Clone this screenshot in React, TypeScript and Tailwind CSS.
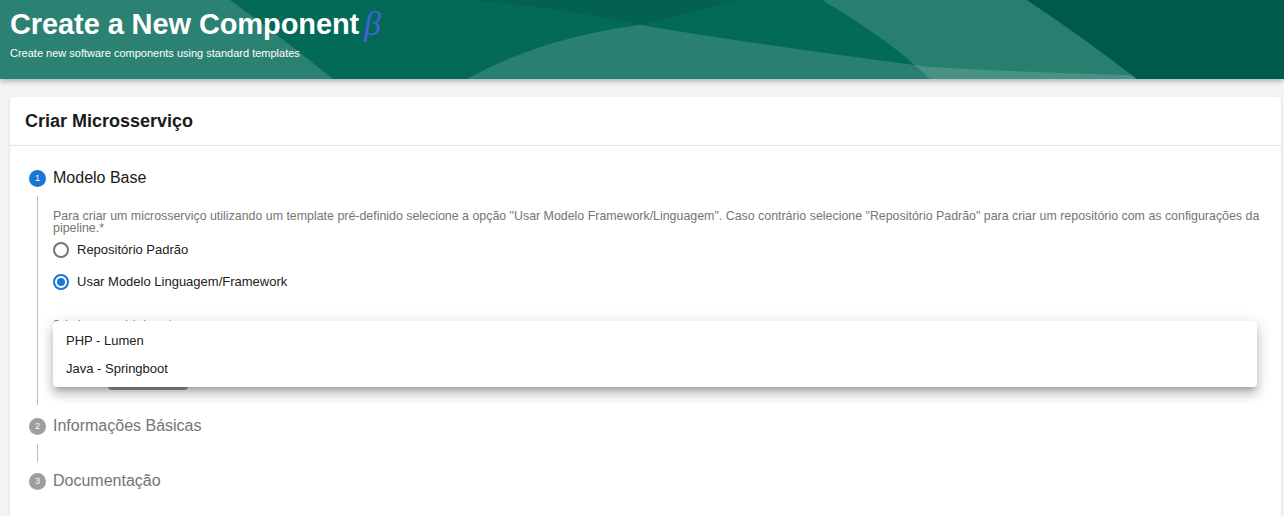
import React from "react";

function StepIcon({ n, active }: { n: number; active?: boolean }) {
  return (
    <div
      className={
        "w-[17px] h-[17px] rounded-full flex items-center justify-center text-white text-[9px] leading-none " +
        (active ? "bg-[#1976d2]" : "bg-[#9e9e9e]")
      }
    >
      {n}
    </div>
  );
}

function Radio({ checked }: { checked?: boolean }) {
  return (
    <div
      className={
        "w-[16px] h-[16px] rounded-full border-2 flex items-center justify-center " +
        (checked ? "border-[#1976d2]" : "border-[#757575]")
      }
    >
      {checked && <div className="w-[8px] h-[8px] rounded-full bg-[#1976d2]" />}
    </div>
  );
}

export default function App() {
  return (
    <div
      className="w-[1284px] h-[516px] overflow-hidden bg-[#f5f5f5] text-[#212121]"
      style={{ fontFamily: '"Liberation Sans", Arial, sans-serif' }}
    >
      <header className="relative h-[79px] bg-[#046a58] shadow-[0_2px_6px_rgba(0,0,0,0.3)] overflow-hidden">
        <svg className="absolute inset-0" width="1284" height="79" viewBox="0 0 1284 79">
          <path d="M0,0 L230,0 Q285,40 333,79 L0,79 Z" fill="rgba(255,255,255,0.16)" />
          <path d="M470,0 Q560,8 640,25 Q700,12 735,0 Z" fill="rgba(0,0,0,0.08)" />
          <path d="M467,79 Q540,38 640,25 Q760,45 930,67 Q1050,74 1284,79 Z" fill="rgba(255,255,255,0.15)" />
          <path d="M822,0 Q890,40 930,79 L1137,79 Q1080,35 1027,0 Z" fill="rgba(255,255,255,0.14)" />
          <path d="M1027,0 Q1080,35 1137,79 L1284,79 L1284,0 Z" fill="#005a49" />
        </svg>
        <div className="relative pl-[10px] pt-[4px]">
          <div className="flex items-start">
            <h1 className="text-[29px] font-bold text-white leading-[40px] tracking-[-0.1px]">
              Create a New Component
            </h1>
            <span
              className="ml-[5px] text-[34px] italic text-[#3f63d4] leading-[40px]"
              style={{ fontFamily: '"Liberation Serif", "Times New Roman", serif' }}
            >
              β
            </span>
          </div>
          <p className="text-[11px] text-white leading-[14px] mt-[2px]">
            Create new software components using standard templates
          </p>
        </div>
      </header>

      <div className="pl-[10px] pr-[3px] pt-[18px]">
        <div className="bg-white rounded-[4px] shadow-[0_1px_3px_rgba(0,0,0,0.15)] h-[440px]">
          <div className="h-[49px] px-[15px] flex items-center border-b border-[#e3e3e3]">
            <h2 className="text-[18px] font-bold text-[#1a1a1a]">Criar Microsserviço</h2>
          </div>

          <div className="pl-[19px] pt-[20px] pr-[24px]">
            {/* Step 1 */}
            <div className="h-[24px] flex items-center gap-[7px]">
              <StepIcon n={1} active />
              <span className="text-[16px] text-[#1a1a1a]">Modelo Base</span>
            </div>
            <div className="relative ml-[8px] mt-[6px] border-l border-[#bdbdbd] pl-[15px] h-[209px] pt-[14px]">
              <p className="text-[12.4px] leading-[12px] text-[#757575] whitespace-nowrap">
                Para criar um microsserviço utilizando um template pré-definido selecione a opção "Usar Modelo
                Framework/Linguagem". Caso contrário selecione "Repositório Padrão" para criar um repositório com as
                configurações da
                <br />
                pipeline.*
              </p>
              <div className="h-[32px] flex items-center gap-[8px]">
                <Radio />
                <span className="text-[13px] text-[#212121]">Repositório Padrão</span>
              </div>
              <div className="h-[32px] flex items-center gap-[8px]">
                <Radio checked />
                <span className="text-[13px] text-[#212121]">Usar Modelo Linguagem/Framework</span>
              </div>
              <div className="mt-[22px] text-[10px] leading-[10px] text-[#1976d2]">Selecione o modelo base *</div>
              <div className="mt-[54px] ml-[55px] w-[80px] h-[6px] rounded-b-[4px] bg-[#9a9a9a]" />

              <div className="absolute left-[15px] top-[125px] w-[1204px] h-[66px] bg-white rounded-[4px] shadow-[0_5px_5px_-3px_rgba(0,0,0,0.2),0_8px_10px_1px_rgba(0,0,0,0.14),0_3px_14px_2px_rgba(0,0,0,0.12)] py-[6px]">
                <div className="h-[28px] flex items-center px-[13px] text-[13px] text-[#212121]">PHP - Lumen</div>
                <div className="h-[28px] flex items-center px-[13px] text-[13px] text-[#212121]">Java - Springboot</div>
              </div>
            </div>

            {/* Step 2 */}
            <div className="mt-[9px] h-[24px] flex items-center gap-[7px]">
              <StepIcon n={2} />
              <span className="text-[16px] text-[#757575]">Informações Básicas</span>
            </div>
            <div className="ml-[8px] mt-[6px] h-[18px] border-l border-[#bdbdbd]" />
            {/* Step 3 */}
            <div className="mt-[7px] h-[24px] flex items-center gap-[7px]">
              <StepIcon n={3} />
              <span className="text-[16px] text-[#757575]">Documentação</span>
            </div>
          </div>
        </div>
      </div>
    </div>
  );
}
